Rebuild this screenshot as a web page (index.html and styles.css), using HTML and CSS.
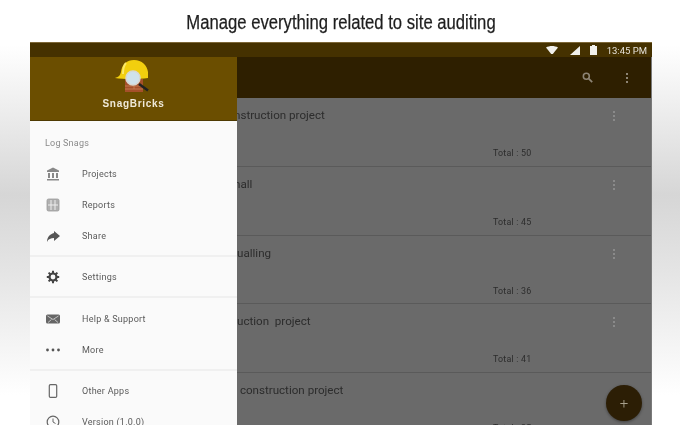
FILE: index.html
```html
<!DOCTYPE html>
<html lang="en">
<head>
<meta charset="utf-8">
<title>SnagBricks</title>
<link rel="stylesheet" href="styles.css">
</head>
<body>
<div class="page">
  <h1 class="headline">Manage everything related to site auditing</h1>
  <div class="device">
    <div class="status">
      <svg class="st-wifi" viewBox="0 0 12 8"><path d="M0 1.500C3.500-.5 8.500-.5 12 1.500L6 9z"/></svg>
      <svg class="st-signal" viewBox="0 0 10 9"><path d="M10 0v9H0z"/></svg>
      <svg class="st-batt" viewBox="0 0 7 10"><path d="M2 0h3v1h2v9H0V1h2z"/></svg>
      <span class="clock">13:45 PM</span>
    </div>
    <div class="screen">
      <aside class="drawer">
        <div class="brand">
          <svg class="logo" viewBox="0 0 36 34">
            <path d="M11 20h18v13H11z" fill="#a5502a"/>
            <path d="M11 27h18M11 30h18M20 27v3" stroke="#d08a5c" stroke-width=".7"/>
            <path d="M1 19C4 18 6 17 7 13 8 5 13 1 20 1c8 0 13 5 14 12v6C24 20.500 10 20.500 1 19z" fill="#f2cf0e"/>
            <path d="M12 4C9 7 9 11 9 15" stroke="#fbe96a" stroke-width="2" fill="none"/>
            <path d="M25 25l9 6.500" stroke="#222" stroke-width="2.500"/>
            <circle cx="19" cy="19" r="7" fill="#cfe2ea" stroke="#d8d8d0" stroke-width="1.500"/>
          </svg>
          <div class="brand-name">SnagBricks</div>
        </div>
        <div class="menu">
          <div class="caption">Log Snags</div>
          <div class="item"><svg class="icon" viewBox="0 0 14 14"><path d="M7 .5L1 3.500V5h12V3.500zM2 6h2v5H2zM6 6h2v5H6zM10 6h2v5h-2zM1 12h12v1.500H1z" fill="#888"/></svg><span>Projects</span></div>
          <div class="item"><svg class="icon" viewBox="0 0 14 14"><rect x="1" y="1" width="12" height="12" rx="1.500" fill="#b0b0b0" stroke="#999" stroke-width=".8"/><path d="M5 2v10M9 2v10M2 7h10" stroke="#eee" stroke-width="1"/></svg><span>Reports</span></div>
          <div class="item"><svg class="icon" viewBox="0 0 14 14"><path d="M8 2l6 5-6 5V9C5 9 2 10 1 13c0-5 3-8 7-9z" fill="#555"/></svg><span>Share</span></div>
          <div class="rule"></div>
          <div class="item"><svg class="icon" viewBox="0 0 14 14"><circle cx="7" cy="7" r="3.500" fill="none" stroke="#444" stroke-width="2.200"/><path d="M7 .8v2.400M7 10.800v2.400M.8 7h2.400M10.800 7h2.400M2.600 2.600l1.700 1.700M9.700 9.700l1.700 1.700M11.400 2.600L9.700 4.300M4.300 9.700l-1.700 1.700" stroke="#444" stroke-width="2"/></svg><span>Settings</span></div>
          <div class="rule rule-wide"></div>
          <div class="item"><svg class="icon" viewBox="0 0 14 14"><rect y="2.500" width="14" height="9" rx="1.500" fill="#666"/><path d="M1.500 4l5.500 3.500L12.500 4M2 10.500l3.500-3M12 10.500l-3.500-3" fill="none" stroke="#ccc" stroke-width=".9"/></svg><span>Help &amp; Support</span></div>
          <div class="item"><svg class="icon" viewBox="0 0 14 14"><circle cx="1.500" cy="7" r="1.400" fill="#555"/><circle cx="7" cy="7" r="1.400" fill="#555"/><circle cx="12.500" cy="7" r="1.400" fill="#555"/></svg><span>More</span></div>
          <div class="rule"></div>
          <div class="item"><svg class="icon" viewBox="0 0 14 14"><rect x="3.300" y=".6" width="7.400" height="12.800" rx="1.200" fill="none" stroke="#666" stroke-width="1.200"/></svg><span>Other Apps</span></div>
          <div class="item"><svg class="icon" viewBox="0 0 14 14"><circle cx="7" cy="7" r="5.800" fill="none" stroke="#666" stroke-width="1.200"/><path d="M7 3.500V7l2.500 1.500" fill="none" stroke="#666" stroke-width="1"/></svg><span>Version (1.0.0)</span></div>
        </div>
      </aside>
      <main class="main">
        <header class="appbar">
          <svg class="search" viewBox="0 0 14 14"><circle cx="5.500" cy="5.500" r="3.800" fill="none" stroke="#8d8474" stroke-width="2"/><path d="M8.500 8.500l4.500 4.500" stroke="#8d8474" stroke-width="2.200"/></svg>
          <div class="dots dots-bar"><i></i><i></i><i></i></div>
        </header>
        <div class="row">
          <div class="row-top"><span class="row-title row-title-shift">nstruction project</span><div class="dots"><i></i><i></i><i></i></div></div>
          <div class="total">Total : 50</div>
        </div>
        <div class="row">
          <div class="row-top"><span class="row-title row-title-shift">hall</span><div class="dots"><i></i><i></i><i></i></div></div>
          <div class="total">Total : 45</div>
        </div>
        <div class="row">
          <div class="row-top"><span class="row-title">ualling</span><div class="dots"><i></i><i></i><i></i></div></div>
          <div class="total">Total : 36</div>
        </div>
        <div class="row">
          <div class="row-top"><span class="row-title">uction&nbsp; project</span><div class="dots"><i></i><i></i><i></i></div></div>
          <div class="total">Total : 41</div>
        </div>
        <div class="row">
          <div class="row-top"><span class="row-title">&nbsp;construction project</span></div>
          <div class="total">Total : 35</div>
        </div>
      </main>
      <div class="fab">+</div>
    </div>
  </div>
</div>
</body>
</html>
```
FILE: styles.css
```css
* { box-sizing: border-box; }
html, body { margin: 0; height: 100%; overflow: hidden; }
body { font-family: Roboto, "Liberation Sans", sans-serif; }
.page {
  width: 680px;
  height: 425px;
  padding: 0 28px 0 30px;
  overflow: hidden;
  background: linear-gradient(180deg, #fff 0, #fff 45px, #d6d6d6 195px, #e4e4e4 270px, #fff 395px);
}
.headline {
  margin: 0;
  height: 42px;
  padding-top: 10px;
  font: 400 20px/24px "Liberation Sans", Arial, sans-serif;
  -webkit-text-stroke: .25px #1e1e1e;
  color: #1e1e1e;
  text-align: center;
  white-space: nowrap;
  transform: scaleX(.833);
  filter: blur(.3px);
}
.device { height: 383px; display: flex; flex-direction: column; background: #6a6a6a; filter: blur(.4px); }
.status {
  height: 15px;
  flex: none;
  background: #453100;
  border-top: 1px solid #7d6738;
  display: flex;
  align-items: center;
  justify-content: flex-end;
  padding-right: 5px;
}
.status svg { fill: #f1f0ec; display: block; }
.st-wifi { width: 12px; height: 8px; margin-right: 12px; }
.st-signal { width: 10px; height: 9px; margin-right: 10px; }
.st-batt { width: 7px; height: 10px; margin-right: 10px; }
.clock { font-size: 9.500px; color: #e6e2d8; }
.screen { position: relative; flex: 1; display: flex; min-height: 0; overflow: hidden; }
.drawer { width: 207px; flex: none; background: #fafafa; display: flex; flex-direction: column; }
.brand {
  height: 64px;
  flex: none;
  background: #6b4e00;
  border-bottom: 1px solid #4f3a02;
  display: flex;
  flex-direction: column;
  align-items: center;
}
.logo { width: 36px; height: 34px; margin: 2px 3px 0 0; display: block; flex: none; }
.brand-name { font: 700 10px/12px "Liberation Sans", Arial, sans-serif; letter-spacing: .7px; color: #efe9d8; margin-top: 5px; }
.menu { flex: 1; overflow: hidden; padding-top: 15px; }
.caption { height: 14px; padding-left: 15px; font-size: 9px; line-height: 14px; color: #8a8a8a; letter-spacing: .2px; margin-bottom: 8px; }
.item { height: 31px; display: flex; align-items: center; padding-left: 16px; font-size: 9px; letter-spacing: .25px; color: #5a5a5a; }
.icon { width: 14px; height: 14px; margin-right: 22px; display: block; flex: none; }
.rule { height: 2px; margin: 4px 0; background: #f0f0f0; }
.rule-wide { margin: 4px 0 5px; }
.main { flex: 1; min-width: 0; overflow: hidden; display: flex; flex-direction: column; border-right: 1px solid #7a7a7a; }
.appbar { height: 41px; flex: none; background: #2e1f00; display: flex; align-items: center; justify-content: flex-end; padding: 0 22px 0 0; }
.search { width: 11px; height: 11px; margin-right: 32px; display: block; }
.dots { display: flex; flex-direction: column; gap: 2px; align-items: center; width: 4px; }
.dots i { width: 2px; height: 2px; background: #8a8a8a; display: block; }
.dots-bar i { background: #8d8474; }
.row { height: 68.750px; flex: none; border-bottom: 1px solid #5a5a5a; padding-top: 10px; }
.row .dots { margin-top: 2px; }
.row-top { display: flex; justify-content: space-between; align-items: center; height: 14px; padding-right: 35px; }
.row-title { font-size: 11.600px; color: #2c2c2c; white-space: nowrap; }
.row-title-shift { margin-left: -3px; }
.total { font-size: 8.900px; line-height: 12px; color: #2c2c2c; margin: 25px 0 0 256px; letter-spacing: .2px; }
.fab {
  position: absolute;
  right: 10px;
  bottom: 4px;
  width: 36px;
  height: 36px;
  border-radius: 50%;
  background: #2c1e05;
  color: #a8a08c;
  font-size: 15px;
  font-weight: 300;
  line-height: 36px;
  text-align: center;
  box-shadow: 0 1px 3px rgba(0,0,0,.4);
}
```
